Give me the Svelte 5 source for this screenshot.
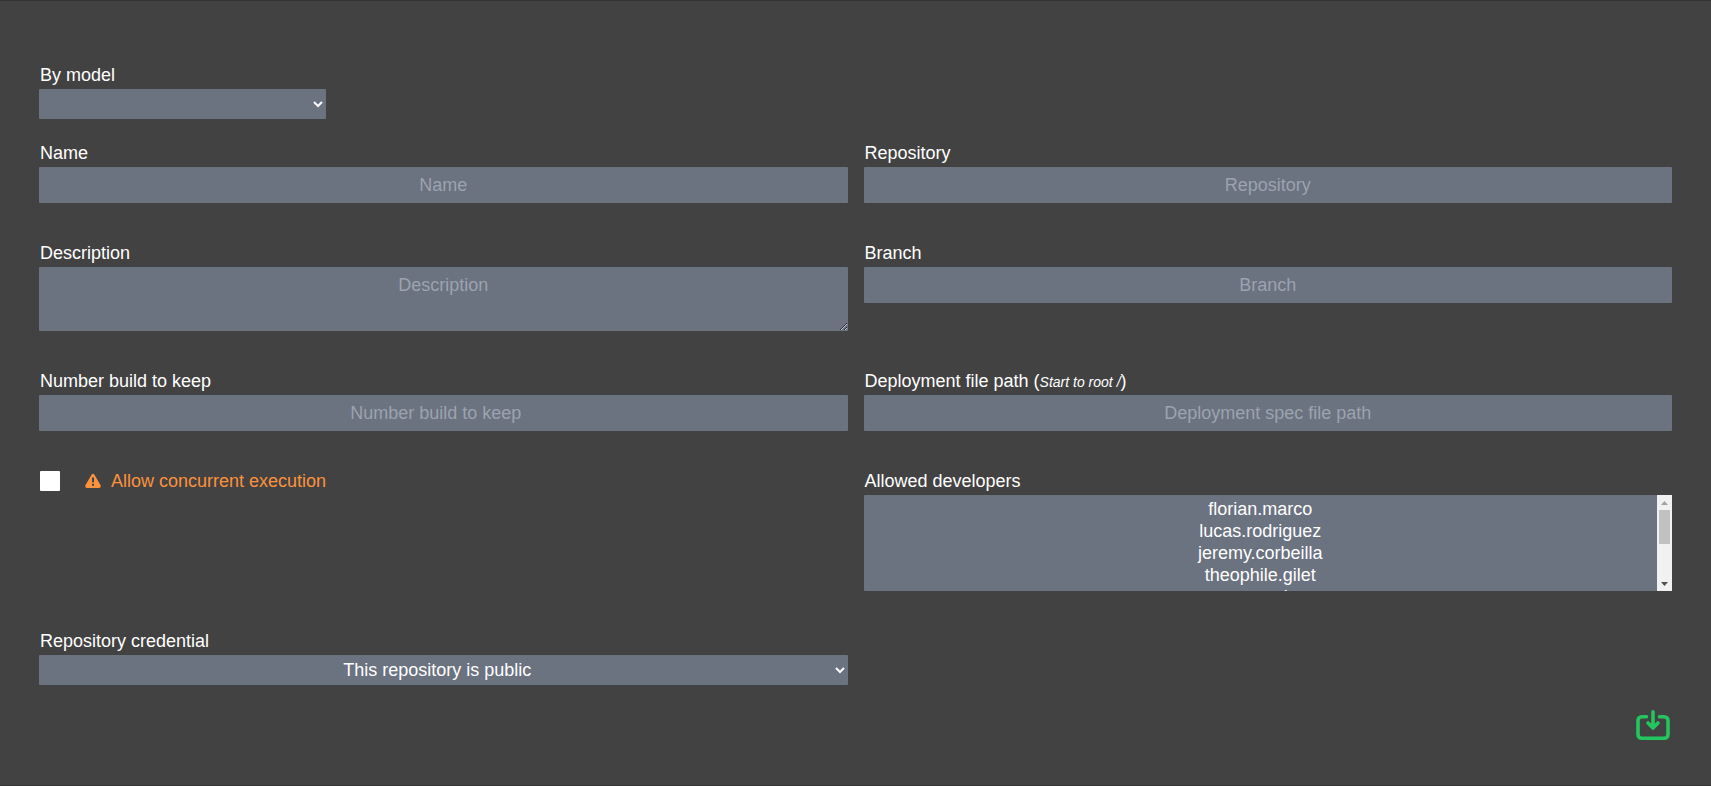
<script>
  const developers = [
    'florian.marco',
    'lucas.rodriguez',
    'jeremy.corbeilla',
    'theophile.gilet',
    'cosmo.cohen',
    'simon.martin',
    'marc.durand',
    'anne.morel'
  ];

  let list;
  let progress = $state(0);

  function updateProgress() {
    const range = list.scrollHeight - list.clientHeight;
    progress = range > 0 ? list.scrollTop / range : 0;
  }

  function scrollList(rows) {
    list.scrollBy({ top: rows * 22 });
  }
</script>

<main>
  <form onsubmit={(e) => e.preventDefault()}>
    <div class="field model">
      <label for="model">By model</label>
      <select id="model"><option value=""></option></select>
    </div>

    <div class="grid">
      <div class="field">
        <label for="name">Name</label>
        <input id="name" type="text" placeholder="Name" />
      </div>
      <div class="field">
        <label for="repository">Repository</label>
        <input id="repository" type="text" placeholder="Repository" />
      </div>
      <div class="field">
        <label for="description">Description</label>
        <textarea id="description" placeholder="Description"></textarea>
      </div>
      <div class="field">
        <label for="branch">Branch</label>
        <input id="branch" type="text" placeholder="Branch" />
      </div>
      <div class="field">
        <label for="keep">Number build to keep</label>
        <input id="keep" type="number" placeholder="Number build to keep" />
      </div>
      <div class="field">
        <label for="path">Deployment file path (<em>Start to root /</em>)</label>
        <input id="path" type="text" placeholder="Deployment spec file path" />
      </div>
      <div class="check">
        <input id="concurrent" type="checkbox" />
        <label for="concurrent">
          <svg viewBox="0 0 16 16" width="16" height="16" aria-hidden="true">
            <path
              fill="currentColor"
              fill-rule="evenodd"
              d="M6.7 1.6Q8 0 9.3 1.6L15.6 12.2Q16.3 15 14 15H2Q-.3 15 .4 12.2ZM7 4.4V9.2H9V4.4ZM7 10.8V12.8H9V10.8Z"
            />
          </svg>
          <span>Allow concurrent execution</span>
        </label>
      </div>
      <div class="field">
        <label for="developers">Allowed developers</label>
        <div class="list">
          <select id="developers" multiple bind:this={list} onscroll={updateProgress}>
            {#each developers as developer}
              <option value={developer}>{developer}</option>
            {/each}
          </select>
          <div class="scrollbar">
            <button type="button" tabindex="-1" aria-label="Scroll up" onclick={() => scrollList(-1)}>
              <svg viewBox="0 0 15 15" width="15" height="15" aria-hidden="true">
                <path d="M4 10L7.5 6L11 10Z" fill={progress > 0 ? '#505050' : '#a3a3a3'} />
              </svg>
            </button>
            <div class="track">
              <div style:flex-grow={progress}></div>
              <div class="thumb"></div>
              <div style:flex-grow={1 - progress}></div>
            </div>
            <button type="button" tabindex="-1" aria-label="Scroll down" onclick={() => scrollList(1)}>
              <svg viewBox="0 0 15 15" width="15" height="15" aria-hidden="true">
                <path d="M4 6L7.5 10L11 6Z" fill={progress < 1 ? '#505050' : '#a3a3a3'} />
              </svg>
            </button>
          </div>
        </div>
      </div>
      <div class="field">
        <label for="credential">Repository credential</label>
        <select id="credential"><option>This repository is public</option></select>
      </div>
    </div>

    <div class="actions">
      <button type="submit" aria-label="Save">
        <svg viewBox="0 0 36 32" width="36" height="32" aria-hidden="true">
          <path
            fill="none"
            stroke="currentColor"
            stroke-width="3.6"
            stroke-linecap="round"
            stroke-linejoin="round"
            d="M10.5 7.8H6Q2 7.8 2 11.8V25.2Q2 29.2 6 29.2H28Q32 29.2 32 25.2V11.8Q32 7.8 28 7.8H23.5M17 2.8V18M12 14L17 19L22 14"
          />
        </svg>
      </button>
    </div>
  </form>
</main>

<style>
  :global(body) {
    margin: 0;
    background: #424242;
  }

  main {
    box-sizing: border-box;
    min-height: 100vh;
    padding: 60px 39px 40px;
    border-top: 1px solid #333;
    border-bottom: 1px solid #333;
    background: #424242;
    color: #fff;
    font: 18px/28px 'Liberation Sans', Arial, sans-serif;
  }

  .grid {
    display: grid;
    grid-template-columns: 1fr 1fr;
    gap: 36px 16px;
    align-items: start;
  }

  .field {
    display: flex;
    flex-direction: column;
  }

  .field label {
    padding-left: 1px;
  }

  .model {
    width: 287px;
    margin-bottom: 20px;
  }

  em {
    font-size: 14px;
    line-height: 20px;
  }

  input,
  textarea,
  select {
    box-sizing: border-box;
    width: 100%;
    margin: 0;
    border: 0;
    border-radius: 1px;
    background: #6b7280;
    color: #fff;
    font: inherit;
    text-align: center;
  }

  input {
    height: 36px;
    padding: 4px 8px;
  }

  textarea {
    display: block;
    height: 64px;
    padding: 4px 8px;
    resize: vertical;
  }

  select {
    height: 30px;
    padding: 0;
  }

  .list {
    display: flex;
    height: 96px;
  }

  .list select {
    flex: 1;
    min-width: 0;
    height: 100%;
    padding: 4px 0;
    overflow-y: scroll;
    scrollbar-width: none;
  }

  .list option {
    box-sizing: border-box;
    height: 22px;
    min-height: 22px;
    padding: 0 2px;
  }

  .scrollbar {
    display: flex;
    flex-direction: column;
    width: 15px;
    background: #f1f1f1;
  }

  .track {
    display: flex;
    flex: 1;
    flex-direction: column;
    padding: 0 2px;
  }

  .thumb {
    height: 34px;
    background: #c1c1c1;
  }

  ::placeholder {
    color: #9ca3af;
    opacity: 1;
  }

  .check {
    display: flex;
    align-items: center;
    gap: 25px;
    padding-left: 1px;
  }

  .check input {
    appearance: none;
    width: 20px;
    height: 20px;
    padding: 0;
    background: #fff;
  }

  .check input:checked {
    background: #fb923c;
  }

  .check label {
    display: flex;
    align-items: center;
    gap: 10px;
    color: #fb923c;
  }

  .actions {
    display: flex;
    justify-content: flex-end;
    margin-top: 24px;
  }

  button {
    display: flex;
    padding: 0;
    border: 0;
    background: none;
    color: #22c55e;
    cursor: pointer;
  }
</style>
